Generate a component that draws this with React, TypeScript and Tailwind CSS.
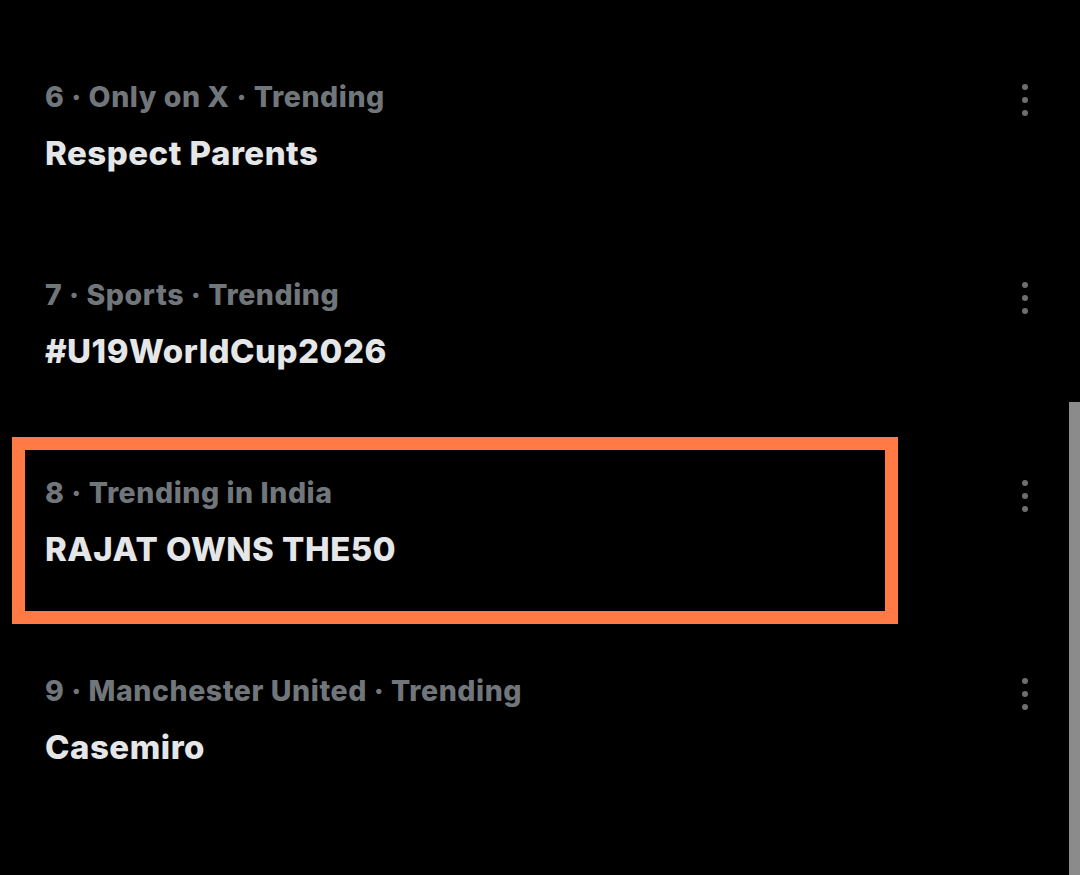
import { useState } from 'react';

interface Trend {
  rank: number;
  context: string;
  title: string;
}

const trends: Trend[] = [
  { rank: 6, context: 'Only on X · Trending', title: 'Respect Parents' },
  { rank: 7, context: 'Sports · Trending', title: '#U19WorldCup2026' },
  { rank: 8, context: 'Trending in India', title: 'RAJAT OWNS THE50' },
  { rank: 9, context: 'Manchester United · Trending', title: 'Casemiro' },
];

function MoreDots() {
  return (
    <button className="flex flex-col items-center gap-[7px] p-0">
      <span className="w-[6px] h-[6px] rounded-full bg-[#6e6e6e]" />
      <span className="w-[6px] h-[6px] rounded-full bg-[#6e6e6e]" />
      <span className="w-[6px] h-[6px] rounded-full bg-[#6e6e6e]" />
    </button>
  );
}

function TrendRow({ trend }: { trend: Trend }) {
  return (
    <div className="h-[198px] flex items-start pl-[45px] pr-[52px]">
      <div className="flex-1 min-w-0">
        <div className="text-[28.5px] leading-[36px] font-extrabold text-[#71767b] tracking-[0.55px]">
          {trend.rank} · {trend.context}
        </div>
        <div className="mt-[18px] text-[33px] leading-[40px] font-extrabold text-[#e4e6e7] tracking-[0.5px]">
          {trend.title}
        </div>
      </div>
      <div className="pt-[5px]">
        <MoreDots />
      </div>
    </div>
  );
}

export default function App() {
  const [highlighted] = useState(8);

  return (
    <div
      className="relative w-[1080px] h-[875px] overflow-hidden bg-black pt-[79px]"
      style={{ fontFamily: 'Inter, "Noto Sans", sans-serif' }}
    >
      {trends.map((t) => (
        <TrendRow key={t.rank} trend={t} />
      ))}

      {/* annotation box around the highlighted trend */}
      {highlighted === 8 && (
        <div className="absolute left-[12px] top-[437px] w-[886px] h-[187px] border-[13px] border-[#ff7a45]" />
      )}

      {/* scrollbar thumb */}
      <div className="absolute right-0 top-[402px] bottom-0 w-[11px] bg-[#8b8b8b]" />
    </div>
  );
}
